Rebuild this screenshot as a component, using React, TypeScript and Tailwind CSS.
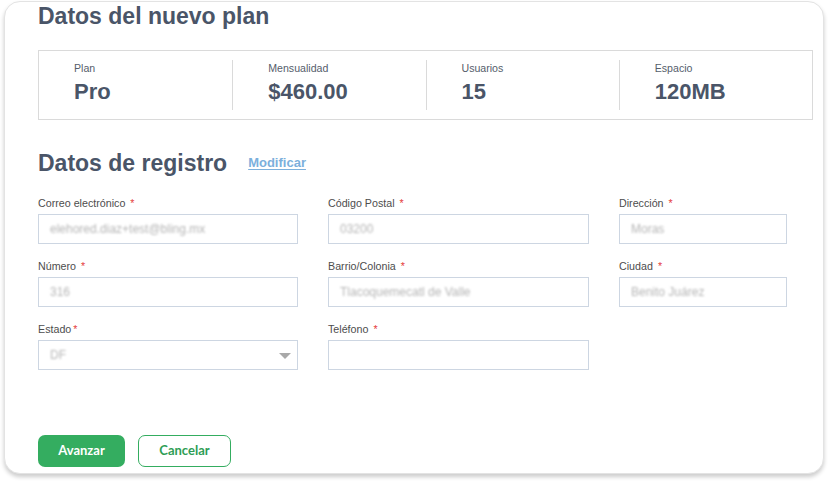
import React from "react";

const planItems = [
  { label: "Plan", value: "Pro" },
  { label: "Mensualidad", value: "$460.00" },
  { label: "Usuarios", value: "15" },
  { label: "Espacio", value: "120MB" },
];

type FieldProps = {
  label: string;
  value?: string;
  tight?: boolean;
  select?: boolean;
};

function Field({ label, value, tight, select }: FieldProps) {
  return (
    <div className="flex flex-col">
      <label className="mb-[4px] h-[14px] text-[10.7px] leading-[14px] text-[#4d4d4d]">
        {label}
        <span className={tight ? "ml-[2px] text-[#e53e3e]" : "ml-[5px] text-[#e53e3e]"}>*</span>
      </label>
      <div className="relative flex h-[30px] items-center border border-[#cdd6e2] bg-white px-[11px]">
        {value && (
          <span className="text-[12px] text-[#b5b5b5] blur-[1.3px]">{value}</span>
        )}
        {select && (
          <svg
            className="absolute right-[6px] top-[12px]"
            width="12"
            height="6"
            viewBox="0 0 12 6"
          >
            <path d="M0 0h12L6 6z" fill="#a9a9a9" />
          </svg>
        )}
      </div>
    </div>
  );
}

export default function App() {
  return (
    <div
      className="h-[482px] w-[830px] overflow-hidden bg-white pl-[4px] pt-[1px]"
      style={{ fontFamily: '"Liberation Sans", Arial, sans-serif' }}
    >
      <div className="h-[473px] w-[820px] rounded-[16px] border border-[#e3e3e3] bg-white pl-[33px] pr-[9px] shadow-[0_3px_4px_rgba(0,0,0,0.2)]">
        <h1 className="pt-[1px] text-[23px] font-bold leading-[26px] text-[#4a5568]">
          Datos del nuevo plan
        </h1>

        <div className="mt-[21px] grid h-[70px] w-[775px] grid-cols-4 border border-[#dadada]">
          {planItems.map((item, i) => (
            <div key={item.label} className="flex items-center">
              <div
                className={
                  i === 0
                    ? "flex h-[50px] w-full flex-col pl-[35px]"
                    : "flex h-[50px] w-full flex-col border-l border-[#dadada] pl-[35px]"
                }
              >
                <span className="pt-[1px] text-[10.6px] leading-[14px] text-[#555d6b]">
                  {item.label}
                </span>
                <span className="mt-[4px] text-[22px] font-bold leading-[26px] text-[#4a5568]">
                  {item.value}
                </span>
              </div>
            </div>
          ))}
        </div>

        <div className="mt-[30px] flex items-center">
          <h2 className="text-[23px] font-bold leading-[26px] text-[#4a5568]">
            Datos de registro
          </h2>
          <a className="ml-[21px] text-[13px] font-bold leading-[16px] text-[#7cb0dc] underline underline-offset-2">
            Modificar
          </a>
        </div>

        <div className="mt-[20px] grid w-[749px] grid-cols-[260px_261px_168px] gap-x-[30px] gap-y-[15px]">
          <Field label="Correo electrónico" value="elehored.diaz+test@bling.mx" />
          <Field label="Código Postal" value="03200" />
          <Field label="Dirección" value="Moras" />
          <Field label="Número" value="316" />
          <Field label="Barrio/Colonia" value="Tlacoquemecatl de Valle" />
          <Field label="Ciudad" value="Benito Juárez" />
          <Field label="Estado" value="DF" tight select />
          <Field label="Teléfono" />
        </div>

        <div
          className="mt-[65px] flex gap-[13px]"
          style={{ fontFamily: 'Lato, "Liberation Sans", sans-serif' }}
        >
          <button className="h-[32px] w-[87px] rounded-[7px] bg-[#34ad60] text-[13px] font-bold text-white">
            Avanzar
          </button>
          <button className="h-[32px] w-[93px] rounded-[7px] border border-[#34ad60] bg-white text-[13px] font-bold text-[#2e9d55]">
            Cancelar
          </button>
        </div>
      </div>
    </div>
  );
}
